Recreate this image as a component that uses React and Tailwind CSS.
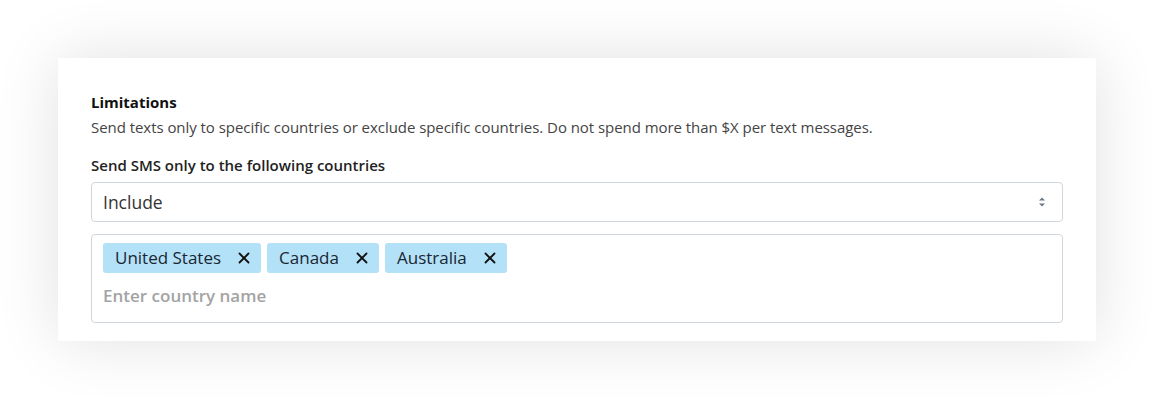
import { X } from "lucide-react";

const countries = ["United States", "Canada", "Australia"];

export default function App() {
  return (
    <div className="min-h-screen bg-white pt-[58px] pl-[58px]" style={{ fontFamily: "'Open Sans', 'Noto Sans', sans-serif" }}>
      <div className="w-[1038px] bg-white pt-[34px] pb-[18px] px-[33px] shadow-[0_0_60px_rgba(0,0,0,0.12)]">
        <h2 className="text-[15px] leading-5 font-bold text-[#111]">Limitations</h2>
        <p className="mt-1 text-[15px] leading-[22px] text-[#444] tracking-[-0.05px]">
          Send texts only to specific countries or exclude specific countries. Do not spend more than $X per text messages.
        </p>

        <label className="block mt-4 text-[15px] leading-[22px] font-semibold text-[#222]">
          Send SMS only to the following countries
        </label>

        <div className="mt-[6px] h-10 flex items-center justify-between border border-[#cfd6dd] rounded pl-[11px] pr-[16px]">
          <span className="text-[17.5px] text-[#333]">Include</span>
          <svg width="8" height="12" viewBox="0 0 8 12" className="text-[#6b7785]">
            <path d="M4 1.5 L7 4.5 H1 Z" fill="currentColor" />
            <path d="M4 10.5 L7 7.5 H1 Z" fill="currentColor" />
          </svg>
        </div>

        <div className="mt-3 border border-[#cfd6dd] rounded pt-2 pb-[14px] px-[11px]">
          <div className="flex gap-[6px]">
            {countries.map((c) => (
              <span key={c} className="h-[30px] flex items-center gap-[14px] bg-[#b3e1f7] rounded-[3px] pl-3 pr-2 text-[17px] text-[#1a2633]">
                {c}
                <X size={18} strokeWidth={2.4} className="text-[#111]" />
              </span>
            ))}
          </div>
          <input
            className="mt-[11px] block w-full outline-none text-[17px] leading-6 font-semibold placeholder:text-[#a3a3a3]"
            placeholder="Enter country name"
          />
        </div>
      </div>
    </div>
  );
}
